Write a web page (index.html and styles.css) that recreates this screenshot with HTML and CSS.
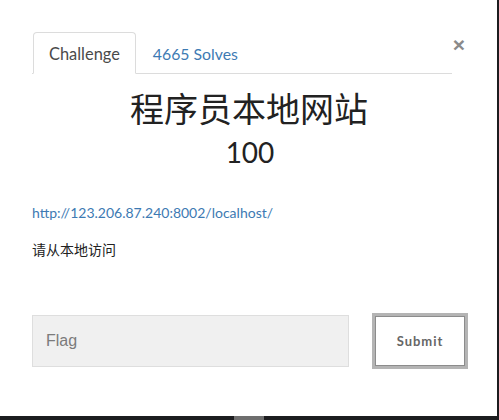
FILE: index.html
```html
<!DOCTYPE html>
<html>
<head>
<meta charset="utf-8">
<link rel="stylesheet" href="styles.css">
</head>
<body>
<div class="modal">
  <div class="header">
    <ul class="tabs">
      <li class="tab active">Challenge</li>
      <li class="tab">4665 Solves</li>
    </ul>
    <button class="close">×</button>
  </div>
  <h2 class="title">程序员本地网站</h2>
  <h3 class="value">100</h3>
  <div class="desc">
    <p class="link">http://123.206.87.240:8002/localhost/</p>
    <p class="text">请从本地访问</p>
  </div>
  <div class="form">
    <div class="input">Flag</div>
    <button class="submit">Submit</button>
  </div>
</div>
<div class="bottombar"><span class="thumb"></span></div>
</body>
</html>
```
FILE: styles.css
```css
html, body {
  margin: 0;
  padding: 0;
  background: #1c1d1f;
  width: 499px;
  height: 420px;
  overflow: hidden;
}
.modal {
  width: 497px;
  height: 416px;
  background: #fff;
  box-sizing: border-box;
  padding: 33px 0 0 32px;
  font-family: Lato, "Noto Sans CJK SC", sans-serif;
}
.header {
  display: flex;
  align-items: flex-start;
  width: 433px;
}
.tabs {
  list-style: none;
  margin: 0;
  padding: 0 0 0 1px;
  display: flex;
  width: 419px;
  border-bottom: 1px solid #dcdcdc;
  height: 40px;
  box-sizing: content-box;
}
.tab {
  font-size: 15.8px;
  color: #3d7ab3;
  padding: 0 15px 0 17px;
  line-height: 41px;
  height: 40px;
}
.tab.active {
  font-size: 16.4px;
  color: #4a4a4a;
  border: 1px solid #dcdcdc;
  border-bottom-color: #fff;
  border-radius: 4px 4px 0 0;
  height: 40px;
  line-height: 41px;
  padding: 0 15px;
  margin-bottom: -1px;
  margin-top: -1px;
  background: #fff;
}
.close {
  margin: 0;
  padding: 0;
  border: 0;
  background: none;
  font-family: "Liberation Sans", Arial, sans-serif;
  font-weight: bold;
  font-size: 21px;
  line-height: 24px;
  color: #8a8a8a;
  margin-left: 1px;
  margin-top: 0;
}
.title {
  margin: 15px 0 0 0;
  width: 434px;
  text-align: center;
  font-family: Lato, "Noto Sans CJK SC", sans-serif;
  font-weight: 400;
  font-size: 34px;
  line-height: 40px;
  color: #222;
}
.value {
  margin: 7px 0 0 0;
  width: 436px;
  text-align: center;
  font-weight: 400;
  font-size: 28px;
  line-height: 32px;
  color: #222;
}
.desc {
  margin-top: 35px;
}
.desc p {
  margin: 0;
  font-size: 14px;
  line-height: 20px;
}
.link {
  color: #3d7ab3;
}
.text {
  margin-top: 17px !important;
  color: #222;
  font-size: 13px;
}
.form {
  margin-top: 53px;
  display: flex;
  align-items: center;
  width: 436px;
}
.input {
  width: 317px;
  height: 52px;
  box-sizing: border-box;
  background: #f0f0f0;
  border: 1px solid #dedede;
  font-family: "Liberation Sans", Arial, sans-serif;
  font-size: 16px;
  color: #7b7b7b;
  padding-left: 13px;
  line-height: 50px;
}
.submit {
  margin-left: 23px;
  width: 96px;
  height: 56px;
  box-sizing: border-box;
  background: #fff;
  border: 3px solid #b4b4b4;
  box-shadow: inset 0 0 0 1px #8c8c8c;
  font-family: Lato, sans-serif;
  font-weight: bold;
  font-size: 13px;
  letter-spacing: 1px;
  color: #666;
  padding: 0;
}
.bottombar {
  height: 4px;
  display: flex;
}
.thumb {
  margin-left: 234px;
  width: 30px;
  height: 4px;
  background: #6e6e6e;
}
```
